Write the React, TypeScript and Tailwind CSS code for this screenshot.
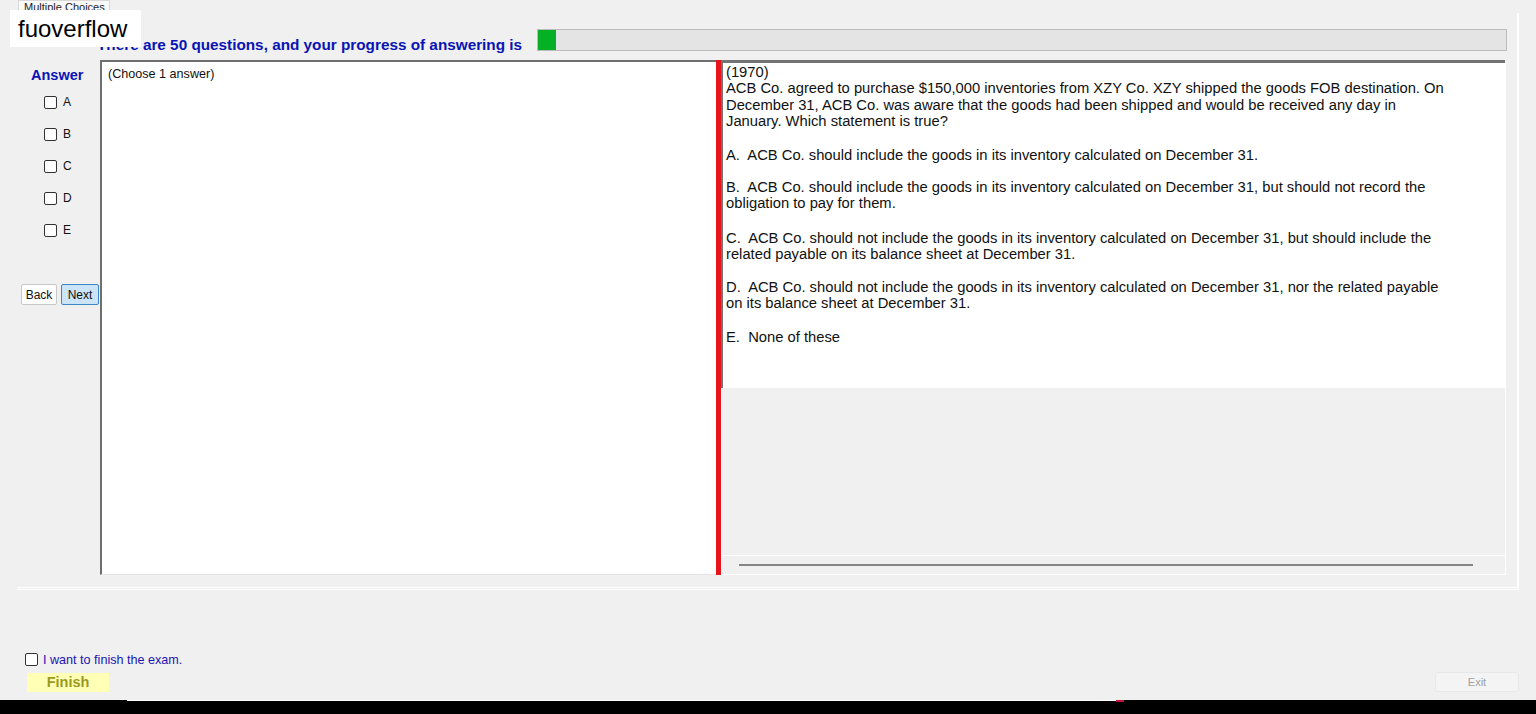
import React from "react";

const Box = () => (
  <div className="w-[13px] h-[13px] border border-[#333] rounded-[2px] bg-white shrink-0" />
);

export default function App() {
  const letters = ["A", "B", "C", "D", "E"];
  return (
    <div
      className="relative w-[1536px] h-[714px] overflow-hidden bg-[#f0f0f0] flex flex-col text-black"
      style={{ fontFamily: '"Liberation Sans", Arial, sans-serif' }}
    >
      {/* tab header */}
      <div className="h-[13px] flex">
        <div className="ml-[18px] w-[92px] h-[13px] bg-[#f9f9f9] border border-b-0 border-[#d9d9d9] text-[11px] leading-[12px] pl-[5px] text-[#222] overflow-hidden">
          Multiple Choices
        </div>
      </div>

      {/* tab page / group */}
      <div className="ml-[17px] w-[1502px] h-[577px] border-b-[3px] border-r-[2px] border-white border-double flex flex-col">
        {/* header row */}
        <div className="h-[47px] flex items-end pb-[9px]">
          <div className="w-[520px] pl-[80px] text-[15.3px] font-bold text-[#0a14b4] leading-[16px] whitespace-nowrap mb-[-2px]">
            There are 50 questions, and your progress of answering is
          </div>
          <div className="w-[970px] h-[22px] bg-[#e4e4e4] border border-[#bcbcbc] flex">
            <div className="w-[18px] h-full bg-[#06b025]" />
          </div>
        </div>

        {/* content */}
        <div className="flex h-[515px]">
          {/* left column */}
          <div className="w-[83px] flex flex-col">
            <div className="pl-[14px] pt-[7px] text-[14.5px] font-bold text-[#0a14b4] leading-[16px]">
              Answer
            </div>
            <div className="flex flex-col gap-[19px] pt-[13px] pl-[27px]">
              {letters.map((l) => (
                <div key={l} className="flex items-center gap-[6px] h-[13px]">
                  <Box />
                  <span className="text-[12px] leading-[13px] text-[#111]">{l}</span>
                </div>
              ))}
            </div>
            <div className="flex gap-[4px] pl-[4px] mt-[47px]">
              <div className="w-[36px] h-[21px] bg-white border border-[#c8c8c8] rounded-[2px] text-[12px] flex items-center justify-center text-[#111]">
                Back
              </div>
              <div className="w-[38px] h-[21px] bg-[#cce4f7] border border-[#3b87c8] rounded-[2px] text-[12px] flex items-center justify-center text-[#111]">
                Next
              </div>
            </div>
          </div>

          {/* middle text box */}
          <div className="w-[616px] h-[515px] bg-white border-l-[2px] border-t-[2px] border-[#6e6e6e] border-b border-b-[#e6e6e6] text-[12.6px] leading-[14px] pl-[6px] pt-[5px] text-[#111]">
            (Choose 1 answer)
          </div>

          {/* splitter */}
          <div className="w-[5px] h-[515px] bg-[#e8141b]" />

          {/* right panel */}
          <div className="w-[785px] h-[515px] flex flex-col border-r border-b border-white">
            <div className="h-[328px] bg-white border-t-[3px] border-l-[2px] border-[#737373] pl-[3px] pt-[1px] text-[14.75px] leading-[16.4px] text-[#111] whitespace-nowrap">
              <div>(1970)</div>
              <div>ACB Co. agreed to purchase $150,000 inventories from XZY Co. XZY shipped the goods FOB destination. On</div>
              <div>December 31, ACB Co. was aware that the goods had been shipped and would be received any day in</div>
              <div>January. Which statement is true?</div>
              <div className="h-[17px]" />
              <div>A.&nbsp; ACB Co. should include the goods in its inventory calculated on December 31.</div>
              <div className="h-[16px]" />
              <div>B.&nbsp; ACB Co. should include the goods in its inventory calculated on December 31, but should not record the</div>
              <div>obligation to pay for them.</div>
              <div className="h-[18px]" />
              <div>C.&nbsp; ACB Co. should not include the goods in its inventory calculated on December 31, but should include the</div>
              <div>related payable on its balance sheet at December 31.</div>
              <div className="h-[16px]" />
              <div>D.&nbsp; ACB Co. should not include the goods in its inventory calculated on December 31, nor the related payable</div>
              <div>on its balance sheet at December 31.</div>
              <div className="h-[18px]" />
              <div>E.&nbsp; None of these</div>
            </div>
            <div className="flex-1 border-l border-[#fafafa] flex flex-col">
              <div className="flex-1 border-b border-white" />
              <div className="h-[18px] flex items-center">
                <div className="ml-[17px] w-[734px] h-[2px] bg-[#858585]" />
              </div>
            </div>
          </div>
        </div>
      </div>

      {/* bottom area */}
      <div className="flex-1 flex items-end justify-between">
        <div className="pl-[25px] pb-[8px] flex flex-col">
          <div className="flex items-center gap-[5px]">
            <Box />
            <span className="text-[12.6px] leading-[14px] text-[#1a14b4] mt-[2px]">I want to finish the exam.</span>
          </div>
          <div className="mt-[6px] ml-[2px] w-[82px] h-[19px] bg-[#ffffb5] text-[14.5px] font-bold text-[#9a9a1e] flex items-center justify-center">
            Finish
          </div>
        </div>
        <div className="mr-[17px] mb-[8px] w-[84px] h-[20px] bg-[#f4f4f4] border border-[#e8e8e8] rounded-[3px] text-[11px] text-[#a0a0a0] flex items-center justify-center">
          Exit
        </div>
      </div>

      {/* bottom black bar */}
      <div className="h-[14px] bg-black relative">
        <div className="absolute left-[127px] top-0 w-[990px] h-[1px] bg-white" />
        <div className="absolute left-[1116px] top-0 w-[8px] h-[2px] bg-[#c0143c]" />
      </div>

      {/* watermark overlay */}
      <div className="absolute left-[10px] top-[10px] w-[131px] h-[37px] bg-white flex items-center pl-[8px] text-[24px] text-black leading-none">
        fuoverflow
      </div>
    </div>
  );
}
